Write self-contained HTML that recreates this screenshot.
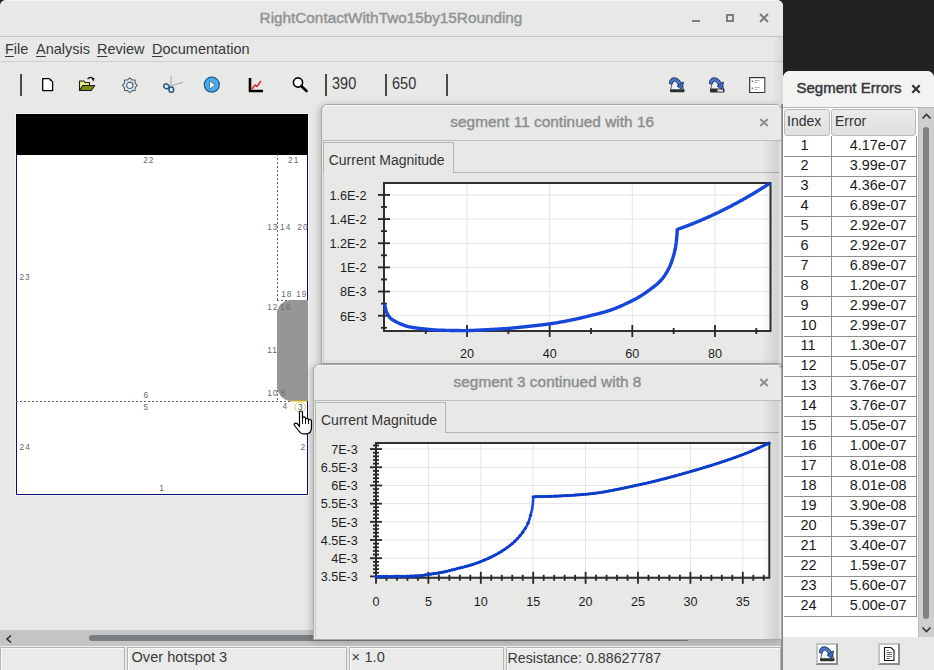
<!DOCTYPE html><html><head><meta charset="utf-8"><style>
*{box-sizing:border-box;margin:0;padding:0}
html,body{width:934px;height:670px;overflow:hidden;background:#222224;font-family:"Liberation Sans",sans-serif;position:relative}
.a{position:absolute;white-space:nowrap}
</style></head><body>
<div class="a" style="left:0;top:0;width:783px;height:670px;background:#e8e8e7;border-radius:6px 6px 0 0;overflow:hidden">
<div class="a" style="left:0;top:0;width:783px;height:37px;background:#e8e8e7;border-bottom:1px solid #c6c6c3;border-radius:6px 6px 0 0;box-shadow:inset 0 1px 0 #f4f4f3"></div>
<div class="a" style="left:0;top:9px;width:782px;text-align:center;font-size:15.3px;-webkit-text-stroke:0.45px #919495;color:#919495">RightContactWithTwo15by15Rounding</div>
<div class="a" style="left:692px;top:20px;width:8px;height:2px;background:#7b7e7f"></div>
<div class="a" style="left:726px;top:14px;width:8px;height:8px;border:2px solid #7b7e7f"></div>
<svg class="a" style="left:759px;top:13px" width="10" height="10"><path d="M1 1L9 9M9 1L1 9" stroke="#7b7e7f" stroke-width="2"/></svg>
<div class="a" style="left:0;top:61px;width:783px;height:1px;background:#cfcfcc"></div>
<div class="a" style="left:5px;top:41px;font-size:14.5px;color:#34393b"><span style="text-decoration:underline;text-underline-offset:1.5px">F</span>ile</div>
<div class="a" style="left:36px;top:41px;font-size:14.5px;color:#34393b"><span style="text-decoration:underline;text-underline-offset:1.5px">A</span>nalysis</div>
<div class="a" style="left:97px;top:41px;font-size:14.5px;color:#34393b"><span style="text-decoration:underline;text-underline-offset:1.5px">R</span>eview</div>
<div class="a" style="left:152px;top:41px;font-size:14.5px;color:#34393b"><span style="text-decoration:underline;text-underline-offset:1.5px">D</span>ocumentation</div>
<div class="a" style="left:20px;top:74px;width:2px;height:22px;background:#4a4a4a"></div>
<div class="a" style="left:325px;top:74px;width:2px;height:22px;background:#4a4a4a"></div>
<div class="a" style="left:385px;top:74px;width:2px;height:22px;background:#4a4a4a"></div>
<div class="a" style="left:446px;top:74px;width:2px;height:22px;background:#4a4a4a"></div>
<div class="a" style="left:331.8px;top:75.3px;font-size:15.6px;color:#333;transform:scaleX(0.93);transform-origin:0 0">390</div>
<div class="a" style="left:391.8px;top:75.3px;font-size:15.6px;color:#333;transform:scaleX(0.93);transform-origin:0 0">650</div>
<svg class="a" style="left:40px;top:76px" width="16" height="16"><path d="M2.7 2.6H9.3L12.6 5.9V14.6H2.7Z" fill="#fff" stroke="#000" stroke-width="1.3" stroke-linejoin="round"/><circle cx="10.6" cy="3.9" r="1" fill="#222"/></svg>
<svg class="a" style="left:78px;top:75px" width="18" height="17"><path d="M1.5 6H6L7 7.5H11.5V15.5H1.5Z" fill="#e4ec80" stroke="#1a1a1a" stroke-width="1.1" stroke-linejoin="round"/><path d="M1.5 15.5L4.8 10.5H16.8L13.2 15.5Z" fill="#7d8c12" stroke="#1a1a1a" stroke-width="1.1" stroke-linejoin="round"/><path d="M9.5 4.2Q12 1.2 14.8 3.2" fill="none" stroke="#111" stroke-width="1.2"/><path d="M13.2 3.6L16.6 2.8L15.6 6.4Z" fill="#111"/></svg>
<svg class="a" style="left:120.5px;top:76.5px" width="18" height="17"><polygon points="8.80,0.90 11.02,2.94 14.03,3.07 14.16,6.08 16.20,8.30 14.16,10.52 14.03,13.53 11.02,13.66 8.80,15.70 6.58,13.66 3.57,13.53 3.44,10.52 1.40,8.30 3.44,6.08 3.57,3.07 6.58,2.94" fill="#dcebf4" stroke="#4f5d69" stroke-width="1.1" stroke-linejoin="round"/><circle cx="8.8" cy="8.3" r="3.2" fill="#e4f0f8" stroke="#4f5d69" stroke-width="1.1"/></svg>
<svg class="a" style="left:162px;top:76px" width="23" height="17"><path d="M8.8 9.5L9.3 0.5M9.5 9.8L21 6.2" stroke="#8f9aa5" stroke-width="0.9" fill="none"/><ellipse cx="4.4" cy="10.3" rx="2.7" ry="2.3" transform="rotate(30 4.4 10.3)" fill="#d4eafa" stroke="#2f5680" stroke-width="1.5"/><ellipse cx="9.3" cy="13.7" rx="2.4" ry="2.6" fill="#d4eafa" stroke="#2f5680" stroke-width="1.5"/></svg>
<svg class="a" style="left:202px;top:76px" width="20" height="18"><circle cx="9.8" cy="8.7" r="7.5" fill="#48ace6" stroke="#22608e" stroke-width="1.3"/><path d="M7.6 4.9L13.2 8.9L7.6 13.2Z" fill="#fff" stroke="#2a6a95" stroke-width="0.8" stroke-linejoin="round"/></svg>
<svg class="a" style="left:247px;top:77px" width="18" height="16"><path d="M3 1V14H16" fill="none" stroke="#000" stroke-width="2.6"/><path d="M5 12L8 8L10 9.5L14 4" fill="none" stroke="#e0202a" stroke-width="1.5"/></svg>
<svg class="a" style="left:291px;top:76px" width="18" height="17"><circle cx="7" cy="6.5" r="4.6" fill="#fff" stroke="#000" stroke-width="1.6"/><path d="M10.2 10L15.5 15" stroke="#000" stroke-width="2.6" stroke-linecap="round"/></svg>
<svg class="a" style="left:669px;top:77px" width="16" height="16"><path d="M2.8 7.5L1.5 13.5H14.8L13.5 7.5" fill="#eef3f4" stroke="#5f6566" stroke-width="1"/><rect x="1" y="12.3" width="14.5" height="3" rx="1" fill="#2a302b"/><path d="M2 5.5Q3.2 1.8 6.5 2.6Q8.5 3.2 11 6.8" fill="none" stroke="#1f3a78" stroke-width="4.2" stroke-linecap="round"/><path d="M2 5.5Q3.2 1.8 6.5 2.6Q8.5 3.2 11 6.8" fill="none" stroke="#4f77c6" stroke-width="2.4" stroke-linecap="round"/><path d="M8 9L14.6 5L12.8 12.6Z" fill="#4068b8" stroke="#1f3a78" stroke-width="0.9" stroke-linejoin="round"/></svg>
<svg class="a" style="left:709px;top:77px" width="16" height="16"><path d="M2.8 7.5L1.5 12.5H14.8L13.5 7.5" fill="#eef3f4" stroke="#5f6566" stroke-width="1"/><rect x="1" y="11.5" width="14.5" height="4" rx="1.2" fill="#2a302b"/><rect x="8.5" y="12.5" width="5.5" height="2" fill="#f4f4f4"/><path d="M2 5.5Q3.2 1.8 6.5 2.6Q8.5 3.2 11 6.8" fill="none" stroke="#1f3a78" stroke-width="4.2" stroke-linecap="round"/><path d="M2 5.5Q3.2 1.8 6.5 2.6Q8.5 3.2 11 6.8" fill="none" stroke="#4f77c6" stroke-width="2.4" stroke-linecap="round"/><path d="M8 9L14.6 5L12.8 12.6Z" fill="#4068b8" stroke="#1f3a78" stroke-width="0.9" stroke-linejoin="round"/></svg>
<svg class="a" style="left:749px;top:77px" width="17" height="16"><rect x="0.7" y="0.6" width="15" height="15" fill="#fff" stroke="#333" stroke-width="1.2"/><path d="M15.6 1V15.6" stroke="#777" stroke-width="1"/><path d="M3.4 3.5V5M3.4 10.5V12" stroke="#3f6db8" stroke-width="1.4"/><path d="M5.5 3.5H10.5M5.5 5.5H8M5.5 10.5H10.5M5.5 12.5H8" stroke="#888" stroke-width="0.7"/></svg>
<svg class="a" style="left:0;top:100px" width="320" height="420" viewBox="0 100 320 420"><rect x="15.5" y="113.5" width="293" height="382" fill="none" stroke="#f4f4f4" stroke-width="1"/><rect x="16" y="114" width="292" height="381" fill="#fff"/><rect x="16" y="114" width="292" height="41" fill="#000"/><path d="M16.5 155V494.5H307.5V155" fill="none" stroke="#0e0e78" stroke-width="1"/><path d="M277.5 154V300" stroke="#666" stroke-width="1" stroke-dasharray="2 2"/><path d="M277 300.5H289" stroke="#666" stroke-width="1" stroke-dasharray="2 2"/><path d="M277.5 386V401" stroke="#666" stroke-width="1" stroke-dasharray="2 2"/><path d="M16 401.5H290" stroke="#666" stroke-width="1" stroke-dasharray="2 2"/><path d="M289.5 300H308V401H290Q279.5 399.5 277 388V311.5Q279 302 289.5 300Z" fill="#969696"/><path d="M290 400.8H307.5" stroke="#c8a830" stroke-width="1.3"/><text x="143.2" y="162.9" font-size="8.3" letter-spacing="1" fill="#686868" font-family="Liberation Sans">22</text><text x="288.1" y="162.8" font-size="8.3" letter-spacing="1" fill="#686868" font-family="Liberation Sans">21</text><text x="267.20000000000005" y="229.7" font-size="8.3" letter-spacing="1" fill="#686868" font-family="Liberation Sans">13</text><text x="280.1" y="229.7" font-size="8.3" letter-spacing="1" fill="#686868" font-family="Liberation Sans">14</text><text x="297.3" y="229.7" font-size="8.3" letter-spacing="1" fill="#686868" font-family="Liberation Sans">20</text><text x="19.5" y="279.7" font-size="8.3" letter-spacing="1" fill="#686868" font-family="Liberation Sans">23</text><text x="281.20000000000005" y="296.9" font-size="8.3" letter-spacing="1" fill="#686868" font-family="Liberation Sans">18</text><text x="296.20000000000005" y="296.9" font-size="8.3" letter-spacing="1" fill="#686868" font-family="Liberation Sans">19</text><text x="267.20000000000005" y="309.8" font-size="8.3" letter-spacing="1" fill="#686868" font-family="Liberation Sans">12</text><text x="267.20000000000005" y="353" font-size="8.3" letter-spacing="1" fill="#686868" font-family="Liberation Sans">11</text><text x="267.20000000000005" y="395.8" font-size="8.3" letter-spacing="1" fill="#686868" font-family="Liberation Sans">10</text><text x="143.6" y="397.8" font-size="8.3" letter-spacing="1" fill="#686868" font-family="Liberation Sans">6</text><text x="143.6" y="409.6" font-size="8.3" letter-spacing="1" fill="#686868" font-family="Liberation Sans">5</text><text x="282.6" y="409.4" font-size="8.3" letter-spacing="1" fill="#686868" font-family="Liberation Sans">4</text><text x="19.6" y="450" font-size="8.3" letter-spacing="1" fill="#686868" font-family="Liberation Sans">24</text><text x="300.6" y="449.7" font-size="8.3" letter-spacing="1" fill="#686868" font-family="Liberation Sans">2</text><text x="159.29999999999998" y="490.6" font-size="8.3" letter-spacing="1" fill="#686868" font-family="Liberation Sans">1</text><text x="280.1" y="309.8" font-size="8.3" letter-spacing="1" fill="#6e6e6e" font-family="Liberation Sans">16</text><text x="280.4" y="396" font-size="8.3" fill="#6e6e6e" font-family="Liberation Sans">8</text><circle cx="300.2" cy="407.3" r="5.2" fill="none" stroke="#e0d050" stroke-width="1"/><text x="297.9" y="410.2" font-size="8.3" fill="#5c5c5c" font-family="Liberation Sans">3</text><g transform="translate(293,410)"><path d="M6.5 14V2.8Q6.5 1 8 1Q9.5 1 9.5 2.8V9V8Q9.5 6.8 11 6.8Q12.5 6.8 12.5 8V9.5Q12.5 8.3 14 8.3Q15.5 8.3 15.5 9.8V10.5Q15.5 9.5 17 9.5Q18.5 9.5 18.5 11V17.5Q18.5 23.5 13.5 23.8H10.5Q7.5 23.8 5.5 20.5L1.5 15.5Q0.6 14 2 13.4Q3.4 12.8 4.6 14.2L6.5 16.5Z" fill="#fff" stroke="#000" stroke-width="1.2" stroke-linejoin="round"/><path d="M9.5 9V14M12.5 9.5V14M15.5 10.5V14" stroke="#000" stroke-width="0.9"/></g></svg>
<div class="a" style="left:0;top:630px;width:782px;height:17px;background:#c4c4c4;border-bottom:1px solid #f0f0f0"></div>
<div class="a" style="left:89px;top:635px;width:600px;height:6px;border-radius:3px;background:#7a7e80"></div>
<svg class="a" style="left:5px;top:634px" width="8" height="10"><path d="M6 1.5L2 5L6 8.5" fill="none" stroke="#2e3436" stroke-width="1.6"/></svg>
<div class="a" style="left:0px;top:647px;width:125px;height:23px;border:1px solid #b4b4b2;border-bottom:none;background:#eaeae9;box-shadow:inset 1px 1px 0 #fafafa"></div>
<div class="a" style="left:127px;top:647px;width:220px;height:23px;border:1px solid #b4b4b2;border-bottom:none;background:#eaeae9;box-shadow:inset 1px 1px 0 #fafafa"></div>
<div class="a" style="left:349px;top:647px;width:155px;height:23px;border:1px solid #b4b4b2;border-bottom:none;background:#eaeae9;box-shadow:inset 1px 1px 0 #fafafa"></div>
<div class="a" style="left:506px;top:647px;width:275px;height:23px;border:1px solid #b4b4b2;border-bottom:none;background:#eaeae9;box-shadow:inset 1px 1px 0 #fafafa"></div>
<div class="a" style="left:131.5px;top:649px;font-size:14.6px;color:#3b3b3b">Over hotspot 3</div>
<div class="a" style="left:351.5px;top:649px;font-size:14.6px;color:#3b3b3b">×</div>
<div class="a" style="left:364.5px;top:649px;font-size:14.6px;color:#3b3b3b">1.0</div>
<div class="a" style="left:507.5px;top:649.5px;font-size:14.25px;color:#3b3b3b">Resistance: 0.88627787</div>
</div>
<div class="a" style="left:781px;top:104px;width:2px;height:566px;background:#8c8c8b"></div>
<div class="a" style="left:772px;top:37px;width:11px;height:67px;background:linear-gradient(to right,rgba(0,0,0,0),rgba(0,0,0,0.07))"></div>
<div class="a" style="left:321px;top:104px;width:461px;height:260px;background:#e8e8e7;border:1px solid #a9a9a7;border-radius:6px 6px 0 0;box-shadow:-2px 1px 7px rgba(0,0,0,0.2);overflow:hidden"><div class="a" style="left:0;top:0;width:461px;height:1px;background:#f6f6f5"></div></div><div class="a" style="left:322px;top:140px;width:459px;height:1px;background:#bdbdba"></div><div class="a" style="left:450.3px;top:113px;font-size:15.3px;letter-spacing:0.06px;-webkit-text-stroke:0.45px #8c8f90;color:#8c8f90">segment 11 continued with 16</div><svg class="a" style="left:759px;top:118px" width="10" height="9"><path d="M1.2 1L8.8 8M8.8 1L1.2 8" stroke="#8a8d8e" stroke-width="2"/></svg><div class="a" style="left:323px;top:141px;width:1px;height:221px;background:#c8c8c6"></div><div class="a" style="left:323px;top:142px;width:131px;height:31px;border:1px solid #b5b5b3;border-bottom:none;background:#e8e8e7;"></div><div class="a" style="left:454px;top:172px;width:326px;height:1px;background:#b5b5b3"></div><div class="a" style="left:328.7px;top:151.8px;font-size:14px;color:#353535">Current Magnitude</div><svg class="a" style="left:0;top:0" width="934" height="670"><rect x="384" y="183" width="386.5" height="148" fill="#fff"/><path d="M467.04 183V331" stroke="#e4e4e4" stroke-width="1"/><path d="M549.68 183V331" stroke="#e4e4e4" stroke-width="1"/><path d="M632.32 183V331" stroke="#e4e4e4" stroke-width="1"/><path d="M714.96 183V331" stroke="#e4e4e4" stroke-width="1"/><path d="M384 315.70H770.5" stroke="#e4e4e4" stroke-width="1"/><path d="M384 291.54H770.5" stroke="#e4e4e4" stroke-width="1"/><path d="M384 267.38H770.5" stroke="#e4e4e4" stroke-width="1"/><path d="M384 243.22H770.5" stroke="#e4e4e4" stroke-width="1"/><path d="M384 219.06H770.5" stroke="#e4e4e4" stroke-width="1"/><path d="M384 194.90H770.5" stroke="#e4e4e4" stroke-width="1"/><rect x="384" y="183" width="386.5" height="148" fill="none" stroke="#303030" stroke-width="2"/><path d="M378 315.70H390" stroke="#262626" stroke-width="1.8"/><path d="M378 291.54H390" stroke="#262626" stroke-width="1.8"/><path d="M378 267.38H390" stroke="#262626" stroke-width="1.8"/><path d="M378 243.22H390" stroke="#262626" stroke-width="1.8"/><path d="M378 219.06H390" stroke="#262626" stroke-width="1.8"/><path d="M378 194.90H390" stroke="#262626" stroke-width="1.8"/><path d="M381 327.78H387" stroke="#262626" stroke-width="1.8"/><path d="M381 303.62H387" stroke="#262626" stroke-width="1.8"/><path d="M381 279.46H387" stroke="#262626" stroke-width="1.8"/><path d="M381 255.30H387" stroke="#262626" stroke-width="1.8"/><path d="M381 231.14H387" stroke="#262626" stroke-width="1.8"/><path d="M381 206.98H387" stroke="#262626" stroke-width="1.8"/><path d="M467.04 325V337" stroke="#262626" stroke-width="1.8"/><path d="M549.68 325V337" stroke="#262626" stroke-width="1.8"/><path d="M632.32 325V337" stroke="#262626" stroke-width="1.8"/><path d="M714.96 325V337" stroke="#262626" stroke-width="1.8"/><path d="M425.72 328V334" stroke="#262626" stroke-width="1.8"/><path d="M508.36 328V334" stroke="#262626" stroke-width="1.8"/><path d="M591.00 328V334" stroke="#262626" stroke-width="1.8"/><path d="M673.64 328V334" stroke="#262626" stroke-width="1.8"/><path d="M756.28 328V334" stroke="#262626" stroke-width="1.8"/><path d="M384.50 303.50 L385.00 306.01 L385.50 308.52 L386.00 310.50 L386.50 311.91 L387.00 313.09 L387.50 314.10 L388.00 315.00 L388.50 315.83 L389.00 316.59 L389.50 317.25 L390.00 317.80 L390.50 318.26 L391.00 318.68 L391.50 319.06 L392.00 319.41 L392.50 319.74 L393.00 320.05 L393.50 320.35 L394.00 320.63 L394.50 320.91 L395.00 321.20 L395.50 321.49 L396.00 321.76 L396.50 322.04 L397.00 322.30 L397.50 322.56 L398.00 322.80 L398.50 323.04 L399.00 323.27 L399.50 323.49 L400.00 323.70 L400.50 323.90 L401.00 324.10 L401.50 324.30 L402.00 324.50 L402.50 324.70 L403.00 324.89 L403.50 325.08 L404.00 325.26 L404.50 325.44 L405.00 325.61 L405.50 325.78 L406.00 325.95 L406.50 326.11 L407.00 326.26 L407.50 326.40 L408.00 326.54 L408.50 326.67 L409.00 326.79 L409.50 326.90 L410.00 327.00 L410.50 327.10 L411.00 327.19 L411.50 327.28 L412.00 327.37 L412.50 327.45 L413.00 327.54 L413.50 327.62 L414.00 327.69 L414.50 327.77 L415.00 327.84 L415.50 327.91 L416.00 327.98 L416.50 328.05 L417.00 328.12 L417.50 328.18 L418.00 328.24 L418.50 328.30 L419.00 328.36 L419.50 328.42 L420.00 328.48 L420.50 328.53 L421.00 328.59 L421.50 328.64 L422.00 328.69 L422.50 328.75 L423.00 328.80 L423.50 328.85 L424.00 328.90 L424.50 328.95 L425.00 329.00 L425.50 329.05 L426.00 329.10 L426.50 329.15 L427.00 329.20 L427.50 329.25 L428.00 329.30 L428.50 329.35 L429.00 329.40 L429.50 329.45 L430.00 329.50 L430.50 329.55 L431.00 329.60 L431.50 329.65 L432.00 329.69 L432.50 329.74 L433.00 329.78 L433.50 329.82 L434.00 329.86 L434.50 329.90 L435.00 329.94 L435.50 329.97 L436.00 330.01 L436.50 330.04 L437.00 330.07 L437.50 330.10 L438.00 330.12 L438.50 330.15 L439.00 330.17 L439.50 330.18 L440.00 330.20 L440.50 330.21 L441.00 330.23 L441.50 330.24 L442.00 330.25 L442.50 330.27 L443.00 330.28 L443.50 330.29 L444.00 330.30 L444.50 330.32 L445.00 330.33 L445.50 330.34 L446.00 330.35 L446.50 330.36 L447.00 330.37 L447.50 330.38 L448.00 330.40 L448.50 330.41 L449.00 330.42 L449.50 330.43 L450.00 330.44 L450.50 330.45 L451.00 330.45 L451.50 330.46 L452.00 330.47 L452.50 330.48 L453.00 330.49 L453.50 330.50 L454.00 330.50 L454.50 330.51 L455.00 330.52 L455.50 330.53 L456.00 330.53 L456.50 330.54 L457.00 330.55 L457.50 330.55 L458.00 330.56 L458.50 330.56 L459.00 330.57 L459.50 330.57 L460.00 330.58 L460.50 330.58 L461.00 330.58 L461.50 330.59 L462.00 330.59 L462.50 330.59 L463.00 330.59 L463.50 330.60 L464.00 330.60 L464.50 330.60 L465.00 330.60 L465.50 330.60 L466.00 330.60 L466.50 330.60 L467.00 330.60 L467.50 330.59 L468.00 330.58 L468.50 330.58 L469.00 330.57 L469.50 330.55 L470.00 330.54 L470.50 330.53 L471.00 330.51 L471.50 330.49 L472.00 330.48 L472.50 330.46 L473.00 330.43 L473.50 330.41 L474.00 330.39 L474.50 330.37 L475.00 330.34 L475.50 330.32 L476.00 330.29 L476.50 330.27 L477.00 330.24 L477.50 330.21 L478.00 330.18 L478.50 330.16 L479.00 330.13 L479.50 330.10 L480.00 330.07 L480.50 330.04 L481.00 330.01 L481.50 329.99 L482.00 329.96 L482.50 329.93 L483.00 329.90 L483.50 329.88 L484.00 329.85 L484.50 329.83 L485.00 329.80 L485.50 329.78 L486.00 329.75 L486.50 329.72 L487.00 329.70 L487.50 329.67 L488.00 329.65 L488.50 329.62 L489.00 329.60 L489.50 329.57 L490.00 329.54 L490.50 329.52 L491.00 329.49 L491.50 329.46 L492.00 329.43 L492.50 329.41 L493.00 329.38 L493.50 329.35 L494.00 329.32 L494.50 329.29 L495.00 329.26 L495.50 329.24 L496.00 329.21 L496.50 329.18 L497.00 329.15 L497.50 329.12 L498.00 329.08 L498.50 329.05 L499.00 329.02 L499.50 328.99 L500.00 328.96 L500.50 328.93 L501.00 328.89 L501.50 328.86 L502.00 328.83 L502.50 328.79 L503.00 328.76 L503.50 328.73 L504.00 328.69 L504.50 328.66 L505.00 328.62 L505.50 328.58 L506.00 328.55 L506.50 328.51 L507.00 328.48 L507.50 328.44 L508.00 328.40 L508.50 328.36 L509.00 328.32 L509.50 328.28 L510.00 328.24 L510.50 328.20 L511.00 328.16 L511.50 328.11 L512.00 328.07 L512.50 328.03 L513.00 327.98 L513.50 327.93 L514.00 327.89 L514.50 327.84 L515.00 327.79 L515.50 327.74 L516.00 327.69 L516.50 327.64 L517.00 327.59 L517.50 327.54 L518.00 327.49 L518.50 327.44 L519.00 327.39 L519.50 327.34 L520.00 327.29 L520.50 327.23 L521.00 327.18 L521.50 327.13 L522.00 327.07 L522.50 327.02 L523.00 326.96 L523.50 326.91 L524.00 326.86 L524.50 326.80 L525.00 326.75 L525.50 326.69 L526.00 326.64 L526.50 326.58 L527.00 326.53 L527.50 326.47 L528.00 326.42 L528.50 326.36 L529.00 326.31 L529.50 326.25 L530.00 326.20 L530.51 326.14 L531.02 326.09 L531.53 326.03 L532.04 325.98 L532.55 325.92 L533.06 325.87 L533.57 325.81 L534.08 325.76 L534.59 325.70 L535.11 325.64 L535.62 325.59 L536.13 325.53 L536.64 325.48 L537.15 325.42 L537.66 325.36 L538.17 325.30 L538.68 325.25 L539.19 325.19 L539.70 325.13 L540.21 325.07 L540.72 325.01 L541.23 324.95 L541.74 324.89 L542.25 324.83 L542.76 324.77 L543.27 324.70 L543.78 324.64 L544.29 324.58 L544.81 324.51 L545.32 324.45 L545.83 324.38 L546.34 324.32 L546.85 324.25 L547.36 324.18 L547.87 324.11 L548.38 324.04 L548.89 323.97 L549.40 323.90 L549.90 323.83 L550.40 323.76 L550.91 323.68 L551.41 323.61 L551.91 323.53 L552.41 323.46 L552.92 323.38 L553.42 323.30 L553.92 323.22 L554.42 323.14 L554.93 323.06 L555.43 322.98 L555.93 322.89 L556.43 322.81 L556.94 322.73 L557.44 322.64 L557.94 322.55 L558.44 322.47 L558.95 322.38 L559.45 322.29 L559.95 322.20 L560.45 322.11 L560.96 322.02 L561.46 321.93 L561.96 321.84 L562.46 321.75 L562.97 321.65 L563.47 321.56 L563.97 321.47 L564.47 321.37 L564.98 321.28 L565.48 321.18 L565.98 321.08 L566.48 320.99 L566.99 320.89 L567.49 320.79 L567.99 320.70 L568.49 320.60 L569.00 320.50 L569.50 320.40 L570.00 320.30 L570.50 320.20 L571.00 320.10 L571.51 320.00 L572.01 319.89 L572.51 319.79 L573.01 319.69 L573.52 319.58 L574.02 319.47 L574.52 319.37 L575.02 319.26 L575.53 319.15 L576.03 319.04 L576.53 318.93 L577.03 318.82 L577.54 318.71 L578.04 318.60 L578.54 318.48 L579.04 318.37 L579.55 318.25 L580.05 318.14 L580.55 318.02 L581.05 317.91 L581.56 317.79 L582.06 317.67 L582.56 317.55 L583.06 317.44 L583.57 317.32 L584.07 317.20 L584.57 317.08 L585.07 316.96 L585.58 316.83 L586.08 316.71 L586.58 316.59 L587.08 316.47 L587.59 316.34 L588.09 316.22 L588.59 316.10 L589.09 315.97 L589.60 315.85 L590.10 315.72 L590.60 315.60 L591.11 315.47 L591.62 315.35 L592.13 315.22 L592.64 315.09 L593.15 314.97 L593.66 314.84 L594.17 314.71 L594.68 314.59 L595.19 314.46 L595.71 314.33 L596.22 314.20 L596.73 314.08 L597.24 313.95 L597.75 313.82 L598.26 313.69 L598.77 313.55 L599.28 313.42 L599.79 313.29 L600.30 313.15 L600.81 313.02 L601.32 312.88 L601.83 312.74 L602.34 312.61 L602.85 312.46 L603.36 312.32 L603.87 312.18 L604.38 312.03 L604.89 311.89 L605.41 311.74 L605.92 311.59 L606.43 311.43 L606.94 311.28 L607.45 311.12 L607.96 310.96 L608.47 310.80 L608.98 310.64 L609.49 310.47 L610.00 310.30 L610.51 310.13 L611.02 309.95 L611.53 309.78 L612.04 309.60 L612.55 309.41 L613.05 309.23 L613.56 309.04 L614.07 308.85 L614.58 308.65 L615.09 308.45 L615.60 308.25 L616.11 308.05 L616.62 307.85 L617.13 307.64 L617.64 307.43 L618.15 307.22 L618.65 307.01 L619.16 306.79 L619.67 306.57 L620.18 306.35 L620.69 306.13 L621.20 305.90 L621.71 305.68 L622.22 305.45 L622.73 305.22 L623.24 304.99 L623.75 304.76 L624.25 304.52 L624.76 304.29 L625.27 304.05 L625.78 303.81 L626.29 303.57 L626.80 303.33 L627.31 303.08 L627.82 302.84 L628.33 302.59 L628.84 302.35 L629.35 302.10 L629.85 301.85 L630.36 301.60 L630.87 301.35 L631.38 301.10 L631.89 300.85 L632.40 300.60 L632.91 300.35 L633.41 300.09 L633.92 299.83 L634.43 299.56 L634.93 299.29 L635.44 299.02 L635.95 298.75 L636.45 298.47 L636.96 298.18 L637.47 297.89 L637.97 297.60 L638.48 297.31 L638.99 297.01 L639.49 296.71 L640.00 296.40 L640.50 296.09 L641.00 295.79 L641.50 295.47 L642.00 295.16 L642.50 294.84 L643.00 294.52 L643.50 294.19 L644.00 293.86 L644.50 293.53 L645.00 293.19 L645.50 292.85 L646.00 292.50 L646.50 292.15 L647.00 291.80 L647.50 291.44 L648.00 291.08 L648.50 290.72 L649.00 290.35 L649.50 289.98 L650.00 289.60 L650.50 289.22 L651.00 288.85 L651.50 288.47 L652.00 288.10 L652.50 287.72 L653.00 287.34 L653.50 286.96 L654.00 286.58 L654.50 286.19 L655.00 285.79 L655.50 285.39 L656.00 284.98 L656.50 284.56 L657.00 284.14 L657.50 283.70 L658.00 283.25 L658.50 282.79 L659.00 282.31 L659.50 281.82 L660.00 281.32 L660.50 280.80 L661.00 280.26 L661.50 279.70 L662.00 279.12 L662.50 278.52 L663.00 277.89 L663.50 277.23 L664.00 276.54 L664.50 275.83 L665.00 275.09 L665.50 274.31 L666.00 273.51 L666.50 272.67 L667.00 271.81 L667.50 270.91 L668.00 269.97 L668.50 269.00 L669.00 268.00 L669.50 266.95 L670.00 265.83 L670.50 264.65 L671.00 263.39 L671.50 262.05 L672.00 260.63 L672.50 259.12 L673.00 257.51 L673.50 255.81 L674.00 254.00 L674.55 251.87 L675.10 249.46 L675.65 246.57 L676.20 243.00 L676.70 237.97 L677.20 232.00 L677.20 229.50 L677.70 229.32 L678.20 229.14 L678.70 228.96 L679.20 228.78 L679.70 228.61 L680.20 228.43 L680.70 228.25 L681.20 228.07 L681.70 227.89 L682.20 227.71 L682.70 227.52 L683.20 227.34 L683.70 227.16 L684.20 226.97 L684.70 226.78 L685.20 226.60 L685.70 226.41 L686.20 226.22 L686.70 226.03 L687.20 225.84 L687.70 225.65 L688.20 225.46 L688.70 225.26 L689.20 225.07 L689.70 224.88 L690.20 224.68 L690.70 224.48 L691.20 224.29 L691.70 224.09 L692.20 223.89 L692.70 223.69 L693.20 223.49 L693.70 223.29 L694.20 223.09 L694.70 222.88 L695.20 222.68 L695.70 222.48 L696.20 222.27 L696.70 222.06 L697.20 221.86 L697.70 221.65 L698.20 221.44 L698.70 221.23 L699.20 221.02 L699.70 220.81 L700.20 220.60 L700.70 220.38 L701.20 220.17 L701.70 219.95 L702.20 219.74 L702.70 219.52 L703.20 219.31 L703.70 219.09 L704.20 218.87 L704.70 218.65 L705.20 218.44 L705.70 218.21 L706.20 217.99 L706.70 217.77 L707.20 217.55 L707.70 217.33 L708.20 217.10 L708.70 216.88 L709.20 216.65 L709.70 216.42 L710.20 216.20 L710.70 215.97 L711.20 215.74 L711.70 215.51 L712.20 215.28 L712.70 215.04 L713.20 214.81 L713.70 214.58 L714.20 214.34 L714.70 214.11 L715.20 213.87 L715.70 213.63 L716.20 213.40 L716.70 213.16 L717.20 212.92 L717.70 212.68 L718.20 212.44 L718.70 212.20 L719.20 211.96 L719.70 211.71 L720.20 211.47 L720.70 211.23 L721.20 210.98 L721.70 210.73 L722.20 210.49 L722.70 210.24 L723.20 209.99 L723.70 209.74 L724.20 209.49 L724.70 209.24 L725.20 208.99 L725.70 208.74 L726.20 208.48 L726.70 208.23 L727.20 207.97 L727.70 207.72 L728.20 207.46 L728.70 207.20 L729.20 206.95 L729.70 206.69 L730.20 206.43 L730.70 206.17 L731.20 205.90 L731.70 205.64 L732.20 205.38 L732.70 205.11 L733.20 204.85 L733.70 204.58 L734.20 204.32 L734.70 204.05 L735.20 203.78 L735.70 203.52 L736.20 203.25 L736.70 202.98 L737.20 202.71 L737.70 202.43 L738.20 202.16 L738.70 201.89 L739.20 201.61 L739.70 201.34 L740.20 201.06 L740.70 200.79 L741.20 200.51 L741.70 200.23 L742.20 199.95 L742.70 199.67 L743.20 199.39 L743.70 199.11 L744.20 198.82 L744.70 198.54 L745.20 198.26 L745.70 197.97 L746.20 197.68 L746.70 197.40 L747.20 197.11 L747.70 196.82 L748.20 196.53 L748.70 196.24 L749.20 195.95 L749.70 195.66 L750.20 195.37 L750.70 195.07 L751.20 194.78 L751.70 194.49 L752.20 194.19 L752.70 193.90 L753.20 193.60 L753.70 193.30 L754.20 193.00 L754.70 192.71 L755.20 192.41 L755.70 192.11 L756.20 191.80 L756.70 191.50 L757.20 191.20 L757.70 190.90 L758.20 190.59 L758.70 190.29 L759.20 189.98 L759.70 189.67 L760.20 189.36 L760.70 189.05 L761.20 188.74 L761.70 188.43 L762.20 188.12 L762.70 187.80 L763.20 187.49 L763.72 187.16 L764.25 186.83 L764.77 186.50 L765.29 186.16 L765.82 185.83 L766.34 185.50 L766.86 185.16 L767.38 184.83 L767.91 184.49 L768.43 184.15 L768.95 183.82 L769.48 183.48 L770.00 183.15" fill="none" stroke="#1646da" stroke-width="3.4" stroke-linejoin="round"/><text x="467.04" y="358.3" font-size="12.6" fill="#1e1e1e" text-anchor="middle" font-family="Liberation Sans">20</text><text x="549.68" y="358.3" font-size="12.6" fill="#1e1e1e" text-anchor="middle" font-family="Liberation Sans">40</text><text x="632.32" y="358.3" font-size="12.6" fill="#1e1e1e" text-anchor="middle" font-family="Liberation Sans">60</text><text x="714.96" y="358.3" font-size="12.6" fill="#1e1e1e" text-anchor="middle" font-family="Liberation Sans">80</text><text x="366.5" y="199.70" font-size="12.6" fill="#1e1e1e" text-anchor="end" font-family="Liberation Sans">1.6E-2</text><text x="366.5" y="223.86" font-size="12.6" fill="#1e1e1e" text-anchor="end" font-family="Liberation Sans">1.4E-2</text><text x="366.5" y="248.02" font-size="12.6" fill="#1e1e1e" text-anchor="end" font-family="Liberation Sans">1.2E-2</text><text x="366.5" y="272.18" font-size="12.6" fill="#1e1e1e" text-anchor="end" font-family="Liberation Sans">1E-2</text><text x="366.5" y="296.34" font-size="12.6" fill="#1e1e1e" text-anchor="end" font-family="Liberation Sans">8E-3</text><text x="366.5" y="320.50" font-size="12.6" fill="#1e1e1e" text-anchor="end" font-family="Liberation Sans">6E-3</text></svg><div class="a" style="left:762px;top:141px;width:17px;height:222px;background:linear-gradient(to right,rgba(0,0,0,0),rgba(0,0,0,0.10))"></div><div class="a" style="left:779px;top:141px;width:2px;height:222px;background:#e2e2e1"></div>
<div class="a" style="left:313px;top:364px;width:469px;height:276px;background:#e8e8e7;border:1px solid #a9a9a7;border-radius:6px 6px 0 0;box-shadow:-2px 1px 7px rgba(0,0,0,0.2);overflow:hidden"><div class="a" style="left:0;top:0;width:469px;height:1px;background:#f6f6f5"></div></div><div class="a" style="left:314px;top:400px;width:467px;height:1px;background:#bdbdba"></div><div class="a" style="left:453.6px;top:373px;font-size:15.3px;letter-spacing:0.06px;-webkit-text-stroke:0.45px #8c8f90;color:#8c8f90">segment 3 continued with 8</div><svg class="a" style="left:759px;top:378px" width="10" height="9"><path d="M1.2 1L8.8 8M8.8 1L1.2 8" stroke="#8a8d8e" stroke-width="2"/></svg><div class="a" style="left:315px;top:401px;width:1px;height:237px;background:#c8c8c6"></div><div class="a" style="left:315px;top:402px;width:131px;height:31px;border:1px solid #b5b5b3;border-bottom:none;background:#e8e8e7;"></div><div class="a" style="left:446px;top:432px;width:334px;height:1px;background:#b5b5b3"></div><div class="a" style="left:321px;top:411.5px;font-size:14px;color:#353535">Current Magnitude</div><svg class="a" style="left:0;top:0" width="934" height="670"><rect x="376" y="443" width="393.29999999999995" height="134.79999999999995" fill="#fff"/><path d="M428.40 443V577.8" stroke="#e4e4e4" stroke-width="1"/><path d="M480.80 443V577.8" stroke="#e4e4e4" stroke-width="1"/><path d="M533.20 443V577.8" stroke="#e4e4e4" stroke-width="1"/><path d="M585.60 443V577.8" stroke="#e4e4e4" stroke-width="1"/><path d="M638.00 443V577.8" stroke="#e4e4e4" stroke-width="1"/><path d="M690.40 443V577.8" stroke="#e4e4e4" stroke-width="1"/><path d="M742.80 443V577.8" stroke="#e4e4e4" stroke-width="1"/><path d="M376 576.40H769.3" stroke="#e4e4e4" stroke-width="1"/><path d="M376 558.21H769.3" stroke="#e4e4e4" stroke-width="1"/><path d="M376 540.02H769.3" stroke="#e4e4e4" stroke-width="1"/><path d="M376 521.83H769.3" stroke="#e4e4e4" stroke-width="1"/><path d="M376 503.64H769.3" stroke="#e4e4e4" stroke-width="1"/><path d="M376 485.45H769.3" stroke="#e4e4e4" stroke-width="1"/><path d="M376 467.26H769.3" stroke="#e4e4e4" stroke-width="1"/><path d="M376 449.07H769.3" stroke="#e4e4e4" stroke-width="1"/><rect x="376" y="443" width="393.29999999999995" height="134.79999999999995" fill="none" stroke="#303030" stroke-width="2"/><path d="M370 576.40H382" stroke="#262626" stroke-width="1.8"/><path d="M370 558.21H382" stroke="#262626" stroke-width="1.8"/><path d="M370 540.02H382" stroke="#262626" stroke-width="1.8"/><path d="M370 521.83H382" stroke="#262626" stroke-width="1.8"/><path d="M370 503.64H382" stroke="#262626" stroke-width="1.8"/><path d="M370 485.45H382" stroke="#262626" stroke-width="1.8"/><path d="M370 467.26H382" stroke="#262626" stroke-width="1.8"/><path d="M370 449.07H382" stroke="#262626" stroke-width="1.8"/><path d="M373 572.76H379" stroke="#262626" stroke-width="1.8"/><path d="M373 569.12H379" stroke="#262626" stroke-width="1.8"/><path d="M373 565.49H379" stroke="#262626" stroke-width="1.8"/><path d="M373 561.85H379" stroke="#262626" stroke-width="1.8"/><path d="M373 554.57H379" stroke="#262626" stroke-width="1.8"/><path d="M373 550.93H379" stroke="#262626" stroke-width="1.8"/><path d="M373 547.30H379" stroke="#262626" stroke-width="1.8"/><path d="M373 543.66H379" stroke="#262626" stroke-width="1.8"/><path d="M373 536.38H379" stroke="#262626" stroke-width="1.8"/><path d="M373 532.74H379" stroke="#262626" stroke-width="1.8"/><path d="M373 529.11H379" stroke="#262626" stroke-width="1.8"/><path d="M373 525.47H379" stroke="#262626" stroke-width="1.8"/><path d="M373 518.19H379" stroke="#262626" stroke-width="1.8"/><path d="M373 514.55H379" stroke="#262626" stroke-width="1.8"/><path d="M373 510.92H379" stroke="#262626" stroke-width="1.8"/><path d="M373 507.28H379" stroke="#262626" stroke-width="1.8"/><path d="M373 500.00H379" stroke="#262626" stroke-width="1.8"/><path d="M373 496.36H379" stroke="#262626" stroke-width="1.8"/><path d="M373 492.73H379" stroke="#262626" stroke-width="1.8"/><path d="M373 489.09H379" stroke="#262626" stroke-width="1.8"/><path d="M373 481.81H379" stroke="#262626" stroke-width="1.8"/><path d="M373 478.17H379" stroke="#262626" stroke-width="1.8"/><path d="M373 474.54H379" stroke="#262626" stroke-width="1.8"/><path d="M373 470.90H379" stroke="#262626" stroke-width="1.8"/><path d="M373 463.62H379" stroke="#262626" stroke-width="1.8"/><path d="M373 459.98H379" stroke="#262626" stroke-width="1.8"/><path d="M373 456.35H379" stroke="#262626" stroke-width="1.8"/><path d="M373 452.71H379" stroke="#262626" stroke-width="1.8"/><path d="M373 445.43H379" stroke="#262626" stroke-width="1.8"/><path d="M376.00 571.8V583.8" stroke="#262626" stroke-width="1.8"/><path d="M428.40 571.8V583.8" stroke="#262626" stroke-width="1.8"/><path d="M480.80 571.8V583.8" stroke="#262626" stroke-width="1.8"/><path d="M533.20 571.8V583.8" stroke="#262626" stroke-width="1.8"/><path d="M585.60 571.8V583.8" stroke="#262626" stroke-width="1.8"/><path d="M638.00 571.8V583.8" stroke="#262626" stroke-width="1.8"/><path d="M690.40 571.8V583.8" stroke="#262626" stroke-width="1.8"/><path d="M742.80 571.8V583.8" stroke="#262626" stroke-width="1.8"/><path d="M386.48 574.8V580.8" stroke="#262626" stroke-width="1.8"/><path d="M396.96 574.8V580.8" stroke="#262626" stroke-width="1.8"/><path d="M407.44 574.8V580.8" stroke="#262626" stroke-width="1.8"/><path d="M417.92 574.8V580.8" stroke="#262626" stroke-width="1.8"/><path d="M438.88 574.8V580.8" stroke="#262626" stroke-width="1.8"/><path d="M449.36 574.8V580.8" stroke="#262626" stroke-width="1.8"/><path d="M459.84 574.8V580.8" stroke="#262626" stroke-width="1.8"/><path d="M470.32 574.8V580.8" stroke="#262626" stroke-width="1.8"/><path d="M491.28 574.8V580.8" stroke="#262626" stroke-width="1.8"/><path d="M501.76 574.8V580.8" stroke="#262626" stroke-width="1.8"/><path d="M512.24 574.8V580.8" stroke="#262626" stroke-width="1.8"/><path d="M522.72 574.8V580.8" stroke="#262626" stroke-width="1.8"/><path d="M543.68 574.8V580.8" stroke="#262626" stroke-width="1.8"/><path d="M554.16 574.8V580.8" stroke="#262626" stroke-width="1.8"/><path d="M564.64 574.8V580.8" stroke="#262626" stroke-width="1.8"/><path d="M575.12 574.8V580.8" stroke="#262626" stroke-width="1.8"/><path d="M596.08 574.8V580.8" stroke="#262626" stroke-width="1.8"/><path d="M606.56 574.8V580.8" stroke="#262626" stroke-width="1.8"/><path d="M617.04 574.8V580.8" stroke="#262626" stroke-width="1.8"/><path d="M627.52 574.8V580.8" stroke="#262626" stroke-width="1.8"/><path d="M648.48 574.8V580.8" stroke="#262626" stroke-width="1.8"/><path d="M658.96 574.8V580.8" stroke="#262626" stroke-width="1.8"/><path d="M669.44 574.8V580.8" stroke="#262626" stroke-width="1.8"/><path d="M679.92 574.8V580.8" stroke="#262626" stroke-width="1.8"/><path d="M700.88 574.8V580.8" stroke="#262626" stroke-width="1.8"/><path d="M711.36 574.8V580.8" stroke="#262626" stroke-width="1.8"/><path d="M721.84 574.8V580.8" stroke="#262626" stroke-width="1.8"/><path d="M732.32 574.8V580.8" stroke="#262626" stroke-width="1.8"/><path d="M753.28 574.8V580.8" stroke="#262626" stroke-width="1.8"/><path d="M763.76 574.8V580.8" stroke="#262626" stroke-width="1.8"/><path d="M376.00 576.60 L376.50 576.60 L377.00 576.59 L377.50 576.59 L378.00 576.58 L378.50 576.58 L379.00 576.58 L379.50 576.57 L380.00 576.57 L380.50 576.57 L381.00 576.56 L381.50 576.56 L382.00 576.56 L382.50 576.55 L383.00 576.55 L383.50 576.55 L384.00 576.54 L384.50 576.54 L385.00 576.54 L385.50 576.53 L386.00 576.53 L386.50 576.53 L387.00 576.52 L387.50 576.52 L388.00 576.52 L388.50 576.51 L389.00 576.51 L389.50 576.51 L390.00 576.50 L390.50 576.50 L391.00 576.49 L391.50 576.49 L392.00 576.49 L392.50 576.48 L393.00 576.48 L393.50 576.47 L394.00 576.47 L394.50 576.46 L395.00 576.46 L395.50 576.45 L396.00 576.45 L396.50 576.44 L397.00 576.44 L397.50 576.43 L398.00 576.43 L398.50 576.42 L399.00 576.41 L399.50 576.41 L400.00 576.40 L400.50 576.39 L401.00 576.39 L401.50 576.38 L402.00 576.37 L402.50 576.36 L403.00 576.35 L403.50 576.34 L404.00 576.33 L404.50 576.32 L405.00 576.31 L405.50 576.30 L406.00 576.29 L406.50 576.27 L407.00 576.26 L407.50 576.25 L408.00 576.23 L408.50 576.22 L409.00 576.20 L409.50 576.19 L410.00 576.17 L410.50 576.15 L411.00 576.14 L411.50 576.12 L412.00 576.10 L412.50 576.08 L413.00 576.06 L413.50 576.04 L414.00 576.02 L414.50 575.99 L415.00 575.97 L415.50 575.95 L416.00 575.92 L416.50 575.90 L417.00 575.87 L417.50 575.85 L418.00 575.82 L418.50 575.79 L419.00 575.76 L419.50 575.73 L420.00 575.70 L420.50 575.66 L421.00 575.62 L421.50 575.56 L422.00 575.50 L422.50 575.43 L423.00 575.35 L423.50 575.27 L424.00 575.19 L424.50 575.10 L425.00 575.01 L425.50 574.92 L426.00 574.83 L426.50 574.74 L427.00 574.65 L427.50 574.56 L428.00 574.48 L428.50 574.40 L429.00 574.33 L429.50 574.25 L430.00 574.18 L430.50 574.11 L431.00 574.04 L431.50 573.97 L432.00 573.90 L432.50 573.83 L433.00 573.76 L433.50 573.70 L434.00 573.63 L434.50 573.56 L435.00 573.49 L435.50 573.41 L436.00 573.34 L436.50 573.27 L437.00 573.19 L437.50 573.12 L438.00 573.04 L438.50 572.96 L439.00 572.87 L439.50 572.79 L440.00 572.70 L440.50 572.61 L441.00 572.52 L441.50 572.42 L442.00 572.32 L442.50 572.22 L443.00 572.12 L443.50 572.01 L444.00 571.90 L444.50 571.79 L445.00 571.68 L445.50 571.57 L446.00 571.45 L446.50 571.34 L447.00 571.22 L447.50 571.10 L448.00 570.98 L448.50 570.85 L449.00 570.73 L449.50 570.60 L450.00 570.48 L450.50 570.35 L451.00 570.22 L451.50 570.10 L452.00 569.97 L452.50 569.84 L453.00 569.71 L453.50 569.58 L454.00 569.45 L454.50 569.32 L455.00 569.19 L455.50 569.06 L456.00 568.93 L456.50 568.80 L457.00 568.67 L457.50 568.54 L458.00 568.41 L458.50 568.28 L459.00 568.15 L459.50 568.03 L460.00 567.90 L460.50 567.78 L461.00 567.65 L461.50 567.53 L462.00 567.40 L462.50 567.28 L463.00 567.16 L463.50 567.03 L464.00 566.91 L464.50 566.78 L465.00 566.66 L465.50 566.53 L466.00 566.40 L466.50 566.27 L467.00 566.14 L467.50 566.01 L468.00 565.87 L468.50 565.73 L469.00 565.59 L469.50 565.45 L470.00 565.30 L470.50 565.15 L471.01 564.99 L471.51 564.84 L472.02 564.68 L472.52 564.51 L473.03 564.35 L473.54 564.18 L474.04 564.01 L474.55 563.84 L475.05 563.66 L475.56 563.49 L476.06 563.31 L476.56 563.13 L477.07 562.94 L477.58 562.76 L478.08 562.57 L478.59 562.38 L479.09 562.19 L479.60 561.99 L480.10 561.80 L480.60 561.61 L481.10 561.41 L481.60 561.21 L482.10 561.01 L482.60 560.81 L483.10 560.61 L483.60 560.40 L484.10 560.19 L484.60 559.98 L485.10 559.77 L485.60 559.56 L486.10 559.34 L486.60 559.12 L487.10 558.90 L487.60 558.68 L488.10 558.45 L488.60 558.22 L489.10 557.99 L489.60 557.76 L490.10 557.52 L490.60 557.29 L491.10 557.05 L491.60 556.80 L492.10 556.56 L492.60 556.31 L493.10 556.05 L493.60 555.80 L494.12 555.53 L494.63 555.27 L495.15 554.99 L495.66 554.72 L496.18 554.44 L496.69 554.16 L497.21 553.87 L497.72 553.59 L498.24 553.29 L498.75 553.00 L499.27 552.70 L499.78 552.40 L500.30 552.09 L500.82 551.78 L501.33 551.46 L501.85 551.14 L502.36 550.82 L502.88 550.49 L503.39 550.16 L503.91 549.82 L504.42 549.48 L504.94 549.13 L505.45 548.78 L505.97 548.43 L506.48 548.07 L507.00 547.70 L507.52 547.32 L508.04 546.94 L508.57 546.55 L509.09 546.15 L509.61 545.75 L510.13 545.33 L510.66 544.91 L511.18 544.48 L511.70 544.05 L512.22 543.60 L512.74 543.15 L513.27 542.68 L513.79 542.21 L514.31 541.73 L514.83 541.23 L515.36 540.73 L515.88 540.22 L516.40 539.70 L516.92 539.17 L517.43 538.63 L517.95 538.07 L518.46 537.50 L518.98 536.91 L519.49 536.31 L520.01 535.69 L520.52 535.05 L521.04 534.40 L521.55 533.72 L522.07 533.03 L522.58 532.33 L523.10 531.60 L523.62 530.85 L524.14 530.09 L524.67 529.32 L525.19 528.51 L525.71 527.65 L526.23 526.75 L526.76 525.78 L527.28 524.73 L527.80 523.60 L528.37 522.24 L528.93 520.71 L529.50 519.01 L530.07 517.13 L530.63 515.06 L531.20 512.80 L531.77 510.60 L532.33 507.88 L532.90 503.40 L533.20 497.00 L533.20 496.70 L533.71 496.69 L534.23 496.68 L534.74 496.68 L535.25 496.67 L535.77 496.66 L536.28 496.65 L536.79 496.64 L537.30 496.64 L537.82 496.63 L538.33 496.62 L538.84 496.61 L539.36 496.61 L539.87 496.60 L540.38 496.59 L540.90 496.58 L541.41 496.57 L541.92 496.56 L542.43 496.55 L542.95 496.54 L543.46 496.53 L543.97 496.52 L544.49 496.51 L545.00 496.50 L545.50 496.49 L546.00 496.48 L546.51 496.46 L547.01 496.45 L547.51 496.43 L548.01 496.42 L548.52 496.41 L549.02 496.39 L549.52 496.37 L550.02 496.36 L550.53 496.34 L551.03 496.33 L551.53 496.31 L552.03 496.29 L552.54 496.27 L553.04 496.25 L553.54 496.23 L554.04 496.21 L554.55 496.19 L555.05 496.17 L555.55 496.15 L556.05 496.13 L556.56 496.11 L557.06 496.09 L557.56 496.07 L558.06 496.04 L558.57 496.02 L559.07 496.00 L559.57 495.97 L560.07 495.95 L560.58 495.92 L561.08 495.90 L561.58 495.87 L562.08 495.85 L562.59 495.82 L563.09 495.80 L563.59 495.77 L564.09 495.74 L564.60 495.71 L565.10 495.69 L565.60 495.66 L566.10 495.63 L566.60 495.60 L567.11 495.57 L567.61 495.54 L568.11 495.51 L568.61 495.48 L569.12 495.45 L569.62 495.42 L570.12 495.38 L570.62 495.35 L571.13 495.32 L571.63 495.29 L572.13 495.25 L572.63 495.22 L573.14 495.19 L573.64 495.15 L574.14 495.12 L574.64 495.08 L575.15 495.05 L575.65 495.01 L576.15 494.98 L576.65 494.94 L577.16 494.91 L577.66 494.87 L578.16 494.83 L578.66 494.80 L579.17 494.76 L579.67 494.72 L580.17 494.68 L580.67 494.64 L581.18 494.60 L581.68 494.57 L582.18 494.53 L582.68 494.49 L583.19 494.45 L583.69 494.41 L584.19 494.37 L584.69 494.32 L585.20 494.28 L585.70 494.24 L586.20 494.20 L586.70 494.16 L587.20 494.11 L587.71 494.07 L588.21 494.02 L588.71 493.97 L589.21 493.92 L589.71 493.87 L590.22 493.82 L590.72 493.76 L591.22 493.71 L591.72 493.65 L592.22 493.59 L592.73 493.53 L593.23 493.47 L593.73 493.41 L594.23 493.35 L594.73 493.28 L595.23 493.22 L595.74 493.15 L596.24 493.08 L596.74 493.01 L597.24 492.94 L597.74 492.87 L598.25 492.80 L598.75 492.72 L599.25 492.65 L599.75 492.57 L600.25 492.50 L600.76 492.42 L601.26 492.34 L601.76 492.26 L602.26 492.18 L602.76 492.10 L603.27 492.01 L603.77 491.93 L604.27 491.85 L604.77 491.76 L605.27 491.67 L605.77 491.59 L606.28 491.50 L606.78 491.41 L607.28 491.32 L607.78 491.23 L608.28 491.14 L608.79 491.04 L609.29 490.95 L609.79 490.86 L610.29 490.76 L610.79 490.67 L611.30 490.57 L611.80 490.48 L612.30 490.38 L612.80 490.28 L613.30 490.18 L613.81 490.08 L614.31 489.99 L614.81 489.89 L615.31 489.78 L615.81 489.68 L616.32 489.58 L616.82 489.48 L617.32 489.38 L617.82 489.28 L618.32 489.17 L618.83 489.07 L619.33 488.96 L619.83 488.86 L620.33 488.76 L620.83 488.65 L621.33 488.55 L621.84 488.44 L622.34 488.33 L622.84 488.23 L623.34 488.12 L623.84 488.01 L624.35 487.91 L624.85 487.80 L625.35 487.69 L625.85 487.59 L626.35 487.48 L626.86 487.37 L627.36 487.26 L627.86 487.16 L628.36 487.05 L628.86 486.94 L629.37 486.83 L629.87 486.72 L630.37 486.61 L630.87 486.51 L631.37 486.40 L631.88 486.29 L632.38 486.18 L632.88 486.08 L633.38 485.97 L633.88 485.86 L634.38 485.75 L634.89 485.65 L635.39 485.54 L635.89 485.43 L636.39 485.32 L636.89 485.22 L637.40 485.11 L637.90 485.01 L638.40 484.90 L638.90 484.79 L639.40 484.69 L639.91 484.58 L640.41 484.47 L640.91 484.36 L641.41 484.26 L641.91 484.15 L642.42 484.04 L642.92 483.93 L643.42 483.81 L643.92 483.70 L644.42 483.59 L644.92 483.48 L645.43 483.36 L645.93 483.25 L646.43 483.14 L646.93 483.02 L647.43 482.91 L647.94 482.79 L648.44 482.67 L648.94 482.56 L649.44 482.44 L649.94 482.32 L650.45 482.20 L650.95 482.08 L651.45 481.96 L651.95 481.84 L652.45 481.72 L652.96 481.60 L653.46 481.48 L653.96 481.36 L654.46 481.24 L654.96 481.11 L655.47 480.99 L655.97 480.87 L656.47 480.74 L656.97 480.62 L657.47 480.49 L657.98 480.37 L658.48 480.24 L658.98 480.12 L659.48 479.99 L659.98 479.86 L660.48 479.73 L660.99 479.61 L661.49 479.48 L661.99 479.35 L662.49 479.22 L662.99 479.09 L663.50 478.96 L664.00 478.83 L664.50 478.70 L665.00 478.57 L665.50 478.44 L666.01 478.30 L666.51 478.17 L667.01 478.04 L667.51 477.91 L668.01 477.77 L668.52 477.64 L669.02 477.51 L669.52 477.37 L670.02 477.24 L670.52 477.10 L671.02 476.97 L671.53 476.83 L672.03 476.70 L672.53 476.56 L673.03 476.42 L673.53 476.29 L674.04 476.15 L674.54 476.01 L675.04 475.88 L675.54 475.74 L676.04 475.60 L676.55 475.46 L677.05 475.32 L677.55 475.18 L678.05 475.05 L678.55 474.91 L679.06 474.77 L679.56 474.63 L680.06 474.49 L680.56 474.35 L681.06 474.21 L681.57 474.07 L682.07 473.92 L682.57 473.78 L683.07 473.64 L683.57 473.50 L684.08 473.36 L684.58 473.22 L685.08 473.07 L685.58 472.93 L686.08 472.79 L686.58 472.65 L687.09 472.50 L687.59 472.36 L688.09 472.22 L688.59 472.07 L689.09 471.93 L689.60 471.79 L690.10 471.64 L690.60 471.50 L691.10 471.36 L691.60 471.21 L692.10 471.07 L692.60 470.92 L693.10 470.78 L693.60 470.64 L694.10 470.49 L694.60 470.35 L695.10 470.20 L695.60 470.05 L696.10 469.91 L696.60 469.76 L697.10 469.62 L697.60 469.47 L698.10 469.32 L698.60 469.18 L699.10 469.03 L699.60 468.88 L700.10 468.73 L700.60 468.58 L701.10 468.44 L701.60 468.29 L702.10 468.14 L702.60 467.99 L703.10 467.84 L703.60 467.69 L704.10 467.54 L704.60 467.39 L705.10 467.24 L705.60 467.08 L706.10 466.93 L706.60 466.78 L707.10 466.63 L707.60 466.48 L708.10 466.32 L708.60 466.17 L709.10 466.01 L709.60 465.86 L710.10 465.71 L710.60 465.55 L711.10 465.40 L711.60 465.24 L712.10 465.08 L712.60 464.93 L713.10 464.77 L713.60 464.61 L714.10 464.46 L714.60 464.30 L715.10 464.14 L715.60 463.98 L716.10 463.82 L716.60 463.66 L717.10 463.50 L717.60 463.34 L718.10 463.18 L718.60 463.02 L719.10 462.86 L719.60 462.69 L720.10 462.53 L720.60 462.37 L721.10 462.20 L721.60 462.04 L722.10 461.87 L722.60 461.71 L723.10 461.54 L723.60 461.38 L724.10 461.21 L724.60 461.04 L725.10 460.88 L725.60 460.71 L726.10 460.54 L726.60 460.37 L727.10 460.20 L727.60 460.03 L728.10 459.86 L728.60 459.69 L729.10 459.52 L729.60 459.34 L730.10 459.17 L730.60 459.00 L731.10 458.82 L731.60 458.65 L732.10 458.48 L732.60 458.30 L733.10 458.12 L733.60 457.95 L734.10 457.77 L734.60 457.59 L735.10 457.41 L735.60 457.23 L736.10 457.06 L736.60 456.88 L737.10 456.69 L737.60 456.51 L738.10 456.33 L738.60 456.15 L739.10 455.97 L739.60 455.78 L740.10 455.60 L740.60 455.41 L741.10 455.23 L741.60 455.04 L742.10 454.85 L742.60 454.67 L743.10 454.48 L743.60 454.29 L744.10 454.10 L744.61 453.91 L745.12 453.71 L745.62 453.51 L746.13 453.31 L746.64 453.11 L747.15 452.90 L747.66 452.70 L748.16 452.49 L748.67 452.28 L749.18 452.07 L749.69 451.85 L750.20 451.64 L750.70 451.42 L751.21 451.20 L751.72 450.98 L752.23 450.76 L752.74 450.54 L753.24 450.32 L753.75 450.10 L754.26 449.87 L754.77 449.64 L755.28 449.42 L755.78 449.19 L756.29 448.96 L756.80 448.73 L757.31 448.50 L757.82 448.27 L758.32 448.04 L758.83 447.81 L759.34 447.58 L759.85 447.35 L760.36 447.12 L760.86 446.89 L761.37 446.65 L761.88 446.42 L762.39 446.19 L762.90 445.96 L763.40 445.73 L763.91 445.50 L764.42 445.27 L764.93 445.04 L765.44 444.81 L765.94 444.58 L766.45 444.35 L766.96 444.12 L767.47 443.90 L767.98 443.67 L768.48 443.45 L768.99 443.22 L769.50 443.00" fill="none" stroke="#1646da" stroke-width="2.6" stroke-linejoin="round"/><circle cx="376.00" cy="576.60" r="1.6" fill="#0a3cc8"/><circle cx="378.62" cy="576.58" r="1.6" fill="#0a3cc8"/><circle cx="381.24" cy="576.56" r="1.6" fill="#0a3cc8"/><circle cx="383.86" cy="576.54" r="1.6" fill="#0a3cc8"/><circle cx="386.48" cy="576.53" r="1.6" fill="#0a3cc8"/><circle cx="389.10" cy="576.51" r="1.6" fill="#0a3cc8"/><circle cx="391.72" cy="576.49" r="1.6" fill="#0a3cc8"/><circle cx="394.34" cy="576.46" r="1.6" fill="#0a3cc8"/><circle cx="396.96" cy="576.44" r="1.6" fill="#0a3cc8"/><circle cx="399.58" cy="576.41" r="1.6" fill="#0a3cc8"/><circle cx="402.20" cy="576.37" r="1.6" fill="#0a3cc8"/><circle cx="404.82" cy="576.31" r="1.6" fill="#0a3cc8"/><circle cx="407.44" cy="576.25" r="1.6" fill="#0a3cc8"/><circle cx="410.06" cy="576.17" r="1.6" fill="#0a3cc8"/><circle cx="412.68" cy="576.07" r="1.6" fill="#0a3cc8"/><circle cx="415.30" cy="575.96" r="1.6" fill="#0a3cc8"/><circle cx="417.92" cy="575.82" r="1.6" fill="#0a3cc8"/><circle cx="420.54" cy="575.66" r="1.6" fill="#0a3cc8"/><circle cx="423.16" cy="575.33" r="1.6" fill="#0a3cc8"/><circle cx="425.78" cy="574.87" r="1.6" fill="#0a3cc8"/><circle cx="428.40" cy="574.42" r="1.6" fill="#0a3cc8"/><circle cx="431.02" cy="574.04" r="1.6" fill="#0a3cc8"/><circle cx="433.64" cy="573.68" r="1.6" fill="#0a3cc8"/><circle cx="436.26" cy="573.30" r="1.6" fill="#0a3cc8"/><circle cx="438.88" cy="572.89" r="1.6" fill="#0a3cc8"/><circle cx="441.50" cy="572.42" r="1.6" fill="#0a3cc8"/><circle cx="444.12" cy="571.88" r="1.6" fill="#0a3cc8"/><circle cx="446.74" cy="571.28" r="1.6" fill="#0a3cc8"/><circle cx="449.36" cy="570.64" r="1.6" fill="#0a3cc8"/><circle cx="451.98" cy="569.97" r="1.6" fill="#0a3cc8"/><circle cx="454.60" cy="569.29" r="1.6" fill="#0a3cc8"/><circle cx="457.22" cy="568.61" r="1.6" fill="#0a3cc8"/><circle cx="459.84" cy="567.94" r="1.6" fill="#0a3cc8"/><circle cx="462.46" cy="567.29" r="1.6" fill="#0a3cc8"/><circle cx="465.08" cy="566.64" r="1.6" fill="#0a3cc8"/><circle cx="467.70" cy="565.95" r="1.6" fill="#0a3cc8"/><circle cx="470.32" cy="565.20" r="1.6" fill="#0a3cc8"/><circle cx="472.94" cy="564.38" r="1.6" fill="#0a3cc8"/><circle cx="475.56" cy="563.48" r="1.6" fill="#0a3cc8"/><circle cx="478.18" cy="562.53" r="1.6" fill="#0a3cc8"/><circle cx="480.80" cy="561.53" r="1.6" fill="#0a3cc8"/><circle cx="483.42" cy="560.47" r="1.6" fill="#0a3cc8"/><circle cx="486.04" cy="559.37" r="1.6" fill="#0a3cc8"/><circle cx="488.66" cy="558.20" r="1.6" fill="#0a3cc8"/><circle cx="491.28" cy="556.96" r="1.6" fill="#0a3cc8"/><circle cx="493.90" cy="555.65" r="1.6" fill="#0a3cc8"/><circle cx="496.52" cy="554.25" r="1.6" fill="#0a3cc8"/><circle cx="499.14" cy="552.77" r="1.6" fill="#0a3cc8"/><circle cx="501.76" cy="551.19" r="1.6" fill="#0a3cc8"/><circle cx="504.38" cy="549.51" r="1.6" fill="#0a3cc8"/><circle cx="507.00" cy="547.70" r="1.6" fill="#0a3cc8"/><circle cx="509.62" cy="545.74" r="1.6" fill="#0a3cc8"/><circle cx="512.24" cy="543.58" r="1.6" fill="#0a3cc8"/><circle cx="514.86" cy="541.21" r="1.6" fill="#0a3cc8"/><circle cx="517.48" cy="538.58" r="1.6" fill="#0a3cc8"/><circle cx="520.10" cy="535.57" r="1.6" fill="#0a3cc8"/><circle cx="522.72" cy="532.14" r="1.6" fill="#0a3cc8"/><circle cx="525.34" cy="528.26" r="1.6" fill="#0a3cc8"/><circle cx="527.96" cy="523.22" r="1.6" fill="#0a3cc8"/><circle cx="530.58" cy="515.25" r="1.6" fill="#0a3cc8"/><circle cx="533.20" cy="497.00" r="1.6" fill="#0a3cc8"/><circle cx="535.82" cy="496.66" r="1.6" fill="#0a3cc8"/><circle cx="538.44" cy="496.62" r="1.6" fill="#0a3cc8"/><circle cx="541.06" cy="496.58" r="1.6" fill="#0a3cc8"/><circle cx="543.68" cy="496.53" r="1.6" fill="#0a3cc8"/><circle cx="546.30" cy="496.47" r="1.6" fill="#0a3cc8"/><circle cx="548.92" cy="496.39" r="1.6" fill="#0a3cc8"/><circle cx="551.54" cy="496.31" r="1.6" fill="#0a3cc8"/><circle cx="554.16" cy="496.21" r="1.6" fill="#0a3cc8"/><circle cx="556.78" cy="496.10" r="1.6" fill="#0a3cc8"/><circle cx="559.40" cy="495.98" r="1.6" fill="#0a3cc8"/><circle cx="562.02" cy="495.85" r="1.6" fill="#0a3cc8"/><circle cx="564.64" cy="495.71" r="1.6" fill="#0a3cc8"/><circle cx="567.26" cy="495.56" r="1.6" fill="#0a3cc8"/><circle cx="569.88" cy="495.40" r="1.6" fill="#0a3cc8"/><circle cx="572.50" cy="495.23" r="1.6" fill="#0a3cc8"/><circle cx="575.12" cy="495.05" r="1.6" fill="#0a3cc8"/><circle cx="577.74" cy="494.86" r="1.6" fill="#0a3cc8"/><circle cx="580.36" cy="494.67" r="1.6" fill="#0a3cc8"/><circle cx="582.98" cy="494.46" r="1.6" fill="#0a3cc8"/><circle cx="585.60" cy="494.25" r="1.6" fill="#0a3cc8"/><circle cx="588.22" cy="494.02" r="1.6" fill="#0a3cc8"/><circle cx="590.84" cy="493.75" r="1.6" fill="#0a3cc8"/><circle cx="593.46" cy="493.44" r="1.6" fill="#0a3cc8"/><circle cx="596.08" cy="493.10" r="1.6" fill="#0a3cc8"/><circle cx="598.70" cy="492.73" r="1.6" fill="#0a3cc8"/><circle cx="601.32" cy="492.33" r="1.6" fill="#0a3cc8"/><circle cx="603.94" cy="491.90" r="1.6" fill="#0a3cc8"/><circle cx="606.56" cy="491.45" r="1.6" fill="#0a3cc8"/><circle cx="609.18" cy="490.97" r="1.6" fill="#0a3cc8"/><circle cx="611.80" cy="490.48" r="1.6" fill="#0a3cc8"/><circle cx="614.42" cy="489.96" r="1.6" fill="#0a3cc8"/><circle cx="617.04" cy="489.44" r="1.6" fill="#0a3cc8"/><circle cx="619.66" cy="488.90" r="1.6" fill="#0a3cc8"/><circle cx="622.28" cy="488.35" r="1.6" fill="#0a3cc8"/><circle cx="624.90" cy="487.79" r="1.6" fill="#0a3cc8"/><circle cx="627.52" cy="487.23" r="1.6" fill="#0a3cc8"/><circle cx="630.14" cy="486.66" r="1.6" fill="#0a3cc8"/><circle cx="632.76" cy="486.10" r="1.6" fill="#0a3cc8"/><circle cx="635.38" cy="485.54" r="1.6" fill="#0a3cc8"/><circle cx="638.00" cy="484.98" r="1.6" fill="#0a3cc8"/><circle cx="640.62" cy="484.43" r="1.6" fill="#0a3cc8"/><circle cx="643.24" cy="483.85" r="1.6" fill="#0a3cc8"/><circle cx="645.86" cy="483.27" r="1.6" fill="#0a3cc8"/><circle cx="648.48" cy="482.66" r="1.6" fill="#0a3cc8"/><circle cx="651.10" cy="482.05" r="1.6" fill="#0a3cc8"/><circle cx="653.72" cy="481.42" r="1.6" fill="#0a3cc8"/><circle cx="656.34" cy="480.77" r="1.6" fill="#0a3cc8"/><circle cx="658.96" cy="480.12" r="1.6" fill="#0a3cc8"/><circle cx="661.58" cy="479.45" r="1.6" fill="#0a3cc8"/><circle cx="664.20" cy="478.78" r="1.6" fill="#0a3cc8"/><circle cx="666.82" cy="478.09" r="1.6" fill="#0a3cc8"/><circle cx="669.44" cy="477.39" r="1.6" fill="#0a3cc8"/><circle cx="672.06" cy="476.69" r="1.6" fill="#0a3cc8"/><circle cx="674.68" cy="475.97" r="1.6" fill="#0a3cc8"/><circle cx="677.30" cy="475.25" r="1.6" fill="#0a3cc8"/><circle cx="679.92" cy="474.53" r="1.6" fill="#0a3cc8"/><circle cx="682.54" cy="473.79" r="1.6" fill="#0a3cc8"/><circle cx="685.16" cy="473.05" r="1.6" fill="#0a3cc8"/><circle cx="687.78" cy="472.31" r="1.6" fill="#0a3cc8"/><circle cx="690.40" cy="471.56" r="1.6" fill="#0a3cc8"/><circle cx="693.02" cy="470.80" r="1.6" fill="#0a3cc8"/><circle cx="695.64" cy="470.04" r="1.6" fill="#0a3cc8"/><circle cx="698.26" cy="469.28" r="1.6" fill="#0a3cc8"/><circle cx="700.88" cy="468.50" r="1.6" fill="#0a3cc8"/><circle cx="703.50" cy="467.72" r="1.6" fill="#0a3cc8"/><circle cx="706.12" cy="466.93" r="1.6" fill="#0a3cc8"/><circle cx="708.74" cy="466.13" r="1.6" fill="#0a3cc8"/><circle cx="711.36" cy="465.31" r="1.6" fill="#0a3cc8"/><circle cx="713.98" cy="464.49" r="1.6" fill="#0a3cc8"/><circle cx="716.60" cy="463.66" r="1.6" fill="#0a3cc8"/><circle cx="719.22" cy="462.82" r="1.6" fill="#0a3cc8"/><circle cx="721.84" cy="461.96" r="1.6" fill="#0a3cc8"/><circle cx="724.46" cy="461.09" r="1.6" fill="#0a3cc8"/><circle cx="727.08" cy="460.21" r="1.6" fill="#0a3cc8"/><circle cx="729.70" cy="459.31" r="1.6" fill="#0a3cc8"/><circle cx="732.32" cy="458.40" r="1.6" fill="#0a3cc8"/><circle cx="734.94" cy="457.47" r="1.6" fill="#0a3cc8"/><circle cx="737.56" cy="456.53" r="1.6" fill="#0a3cc8"/><circle cx="740.18" cy="455.57" r="1.6" fill="#0a3cc8"/><circle cx="742.80" cy="454.59" r="1.6" fill="#0a3cc8"/><circle cx="745.42" cy="453.59" r="1.6" fill="#0a3cc8"/><circle cx="748.04" cy="452.54" r="1.6" fill="#0a3cc8"/><circle cx="750.66" cy="451.44" r="1.6" fill="#0a3cc8"/><circle cx="753.28" cy="450.30" r="1.6" fill="#0a3cc8"/><circle cx="755.90" cy="449.14" r="1.6" fill="#0a3cc8"/><circle cx="758.52" cy="447.95" r="1.6" fill="#0a3cc8"/><circle cx="761.14" cy="446.76" r="1.6" fill="#0a3cc8"/><circle cx="763.76" cy="445.57" r="1.6" fill="#0a3cc8"/><circle cx="766.38" cy="444.38" r="1.6" fill="#0a3cc8"/><circle cx="769.00" cy="443.22" r="1.6" fill="#0a3cc8"/><text x="376.00" y="605.5" font-size="12.6" fill="#1e1e1e" text-anchor="middle" font-family="Liberation Sans">0</text><text x="428.40" y="605.5" font-size="12.6" fill="#1e1e1e" text-anchor="middle" font-family="Liberation Sans">5</text><text x="480.80" y="605.5" font-size="12.6" fill="#1e1e1e" text-anchor="middle" font-family="Liberation Sans">10</text><text x="533.20" y="605.5" font-size="12.6" fill="#1e1e1e" text-anchor="middle" font-family="Liberation Sans">15</text><text x="585.60" y="605.5" font-size="12.6" fill="#1e1e1e" text-anchor="middle" font-family="Liberation Sans">20</text><text x="638.00" y="605.5" font-size="12.6" fill="#1e1e1e" text-anchor="middle" font-family="Liberation Sans">25</text><text x="690.40" y="605.5" font-size="12.6" fill="#1e1e1e" text-anchor="middle" font-family="Liberation Sans">30</text><text x="742.80" y="605.5" font-size="12.6" fill="#1e1e1e" text-anchor="middle" font-family="Liberation Sans">35</text><text x="357.8" y="453.87" font-size="12.6" fill="#1e1e1e" text-anchor="end" font-family="Liberation Sans">7E-3</text><text x="357.8" y="472.06" font-size="12.6" fill="#1e1e1e" text-anchor="end" font-family="Liberation Sans">6.5E-3</text><text x="357.8" y="490.25" font-size="12.6" fill="#1e1e1e" text-anchor="end" font-family="Liberation Sans">6E-3</text><text x="357.8" y="508.44" font-size="12.6" fill="#1e1e1e" text-anchor="end" font-family="Liberation Sans">5.5E-3</text><text x="357.8" y="526.63" font-size="12.6" fill="#1e1e1e" text-anchor="end" font-family="Liberation Sans">5E-3</text><text x="357.8" y="544.82" font-size="12.6" fill="#1e1e1e" text-anchor="end" font-family="Liberation Sans">4.5E-3</text><text x="357.8" y="563.01" font-size="12.6" fill="#1e1e1e" text-anchor="end" font-family="Liberation Sans">4E-3</text><text x="357.8" y="581.20" font-size="12.6" fill="#1e1e1e" text-anchor="end" font-family="Liberation Sans">3.5E-3</text></svg><div class="a" style="left:762px;top:401px;width:17px;height:238px;background:linear-gradient(to right,rgba(0,0,0,0),rgba(0,0,0,0.10))"></div><div class="a" style="left:779px;top:401px;width:2px;height:238px;background:#e2e2e1"></div>
<div class="a" style="left:783px;top:71px;width:151px;height:610px;background:#e8e8e7;border-radius:7px 7px 0 0;overflow:hidden">
<div class="a" style="left:0;top:0;width:151px;height:37px;background:#f3f3f2;border-bottom:1px solid #b9b9b6"></div>
</div>
<div class="a" style="left:796.5px;top:79px;font-size:15px;-webkit-text-stroke:0.45px #34393b;color:#34393b">Segment Errors</div>
<svg class="a" style="left:911px;top:84px" width="10" height="10"><path d="M1.3 1.3L8.7 8.7M8.7 1.3L1.3 8.7" stroke="#2e3436" stroke-width="2.2"/></svg>
<div class="a" style="left:783px;top:108px;width:135px;height:529px;background:#fff"></div>
<div class="a" style="left:784px;top:109px;width:46px;height:27px;border:1px solid #b9b9b7;border-radius:3px;background:linear-gradient(#ececeb,#dfdfde)"></div>
<div class="a" style="left:787px;top:113px;font-size:14px;color:#2e3436">Index</div>
<div class="a" style="left:831px;top:109px;width:85px;height:27px;border:1px solid #b9b9b7;border-radius:3px;background:linear-gradient(#ececeb,#dfdfde)"></div>
<div class="a" style="left:835px;top:113px;font-size:14px;color:#2e3436">Error</div>
<div class="a" style="left:784px;top:156px;width:132px;height:1px;background:#8e8e8e"></div><div class="a" style="left:800.5px;top:137px;font-size:14.5px;color:#1a1a1a">1</div><div class="a" style="left:831px;top:137px;width:75.5px;text-align:right;font-size:14.4px;color:#1a1a1a">4.17e-07</div><div class="a" style="left:784px;top:176px;width:132px;height:1px;background:#8e8e8e"></div><div class="a" style="left:800.5px;top:157px;font-size:14.5px;color:#1a1a1a">2</div><div class="a" style="left:831px;top:157px;width:75.5px;text-align:right;font-size:14.4px;color:#1a1a1a">3.99e-07</div><div class="a" style="left:784px;top:196px;width:132px;height:1px;background:#8e8e8e"></div><div class="a" style="left:800.5px;top:177px;font-size:14.5px;color:#1a1a1a">3</div><div class="a" style="left:831px;top:177px;width:75.5px;text-align:right;font-size:14.4px;color:#1a1a1a">4.36e-07</div><div class="a" style="left:784px;top:216px;width:132px;height:1px;background:#8e8e8e"></div><div class="a" style="left:800.5px;top:197px;font-size:14.5px;color:#1a1a1a">4</div><div class="a" style="left:831px;top:197px;width:75.5px;text-align:right;font-size:14.4px;color:#1a1a1a">6.89e-07</div><div class="a" style="left:784px;top:236px;width:132px;height:1px;background:#8e8e8e"></div><div class="a" style="left:800.5px;top:217px;font-size:14.5px;color:#1a1a1a">5</div><div class="a" style="left:831px;top:217px;width:75.5px;text-align:right;font-size:14.4px;color:#1a1a1a">2.92e-07</div><div class="a" style="left:784px;top:256px;width:132px;height:1px;background:#8e8e8e"></div><div class="a" style="left:800.5px;top:237px;font-size:14.5px;color:#1a1a1a">6</div><div class="a" style="left:831px;top:237px;width:75.5px;text-align:right;font-size:14.4px;color:#1a1a1a">2.92e-07</div><div class="a" style="left:784px;top:276px;width:132px;height:1px;background:#8e8e8e"></div><div class="a" style="left:800.5px;top:257px;font-size:14.5px;color:#1a1a1a">7</div><div class="a" style="left:831px;top:257px;width:75.5px;text-align:right;font-size:14.4px;color:#1a1a1a">6.89e-07</div><div class="a" style="left:784px;top:296px;width:132px;height:1px;background:#8e8e8e"></div><div class="a" style="left:800.5px;top:277px;font-size:14.5px;color:#1a1a1a">8</div><div class="a" style="left:831px;top:277px;width:75.5px;text-align:right;font-size:14.4px;color:#1a1a1a">1.20e-07</div><div class="a" style="left:784px;top:316px;width:132px;height:1px;background:#8e8e8e"></div><div class="a" style="left:800.5px;top:297px;font-size:14.5px;color:#1a1a1a">9</div><div class="a" style="left:831px;top:297px;width:75.5px;text-align:right;font-size:14.4px;color:#1a1a1a">2.99e-07</div><div class="a" style="left:784px;top:336px;width:132px;height:1px;background:#8e8e8e"></div><div class="a" style="left:800.5px;top:317px;font-size:14.5px;color:#1a1a1a">10</div><div class="a" style="left:831px;top:317px;width:75.5px;text-align:right;font-size:14.4px;color:#1a1a1a">2.99e-07</div><div class="a" style="left:784px;top:356px;width:132px;height:1px;background:#8e8e8e"></div><div class="a" style="left:800.5px;top:337px;font-size:14.5px;color:#1a1a1a">11</div><div class="a" style="left:831px;top:337px;width:75.5px;text-align:right;font-size:14.4px;color:#1a1a1a">1.30e-07</div><div class="a" style="left:784px;top:376px;width:132px;height:1px;background:#8e8e8e"></div><div class="a" style="left:800.5px;top:357px;font-size:14.5px;color:#1a1a1a">12</div><div class="a" style="left:831px;top:357px;width:75.5px;text-align:right;font-size:14.4px;color:#1a1a1a">5.05e-07</div><div class="a" style="left:784px;top:396px;width:132px;height:1px;background:#8e8e8e"></div><div class="a" style="left:800.5px;top:377px;font-size:14.5px;color:#1a1a1a">13</div><div class="a" style="left:831px;top:377px;width:75.5px;text-align:right;font-size:14.4px;color:#1a1a1a">3.76e-07</div><div class="a" style="left:784px;top:416px;width:132px;height:1px;background:#8e8e8e"></div><div class="a" style="left:800.5px;top:397px;font-size:14.5px;color:#1a1a1a">14</div><div class="a" style="left:831px;top:397px;width:75.5px;text-align:right;font-size:14.4px;color:#1a1a1a">3.76e-07</div><div class="a" style="left:784px;top:436px;width:132px;height:1px;background:#8e8e8e"></div><div class="a" style="left:800.5px;top:417px;font-size:14.5px;color:#1a1a1a">15</div><div class="a" style="left:831px;top:417px;width:75.5px;text-align:right;font-size:14.4px;color:#1a1a1a">5.05e-07</div><div class="a" style="left:784px;top:456px;width:132px;height:1px;background:#8e8e8e"></div><div class="a" style="left:800.5px;top:437px;font-size:14.5px;color:#1a1a1a">16</div><div class="a" style="left:831px;top:437px;width:75.5px;text-align:right;font-size:14.4px;color:#1a1a1a">1.00e-07</div><div class="a" style="left:784px;top:476px;width:132px;height:1px;background:#8e8e8e"></div><div class="a" style="left:800.5px;top:457px;font-size:14.5px;color:#1a1a1a">17</div><div class="a" style="left:831px;top:457px;width:75.5px;text-align:right;font-size:14.4px;color:#1a1a1a">8.01e-08</div><div class="a" style="left:784px;top:496px;width:132px;height:1px;background:#8e8e8e"></div><div class="a" style="left:800.5px;top:477px;font-size:14.5px;color:#1a1a1a">18</div><div class="a" style="left:831px;top:477px;width:75.5px;text-align:right;font-size:14.4px;color:#1a1a1a">8.01e-08</div><div class="a" style="left:784px;top:516px;width:132px;height:1px;background:#8e8e8e"></div><div class="a" style="left:800.5px;top:497px;font-size:14.5px;color:#1a1a1a">19</div><div class="a" style="left:831px;top:497px;width:75.5px;text-align:right;font-size:14.4px;color:#1a1a1a">3.90e-08</div><div class="a" style="left:784px;top:536px;width:132px;height:1px;background:#8e8e8e"></div><div class="a" style="left:800.5px;top:517px;font-size:14.5px;color:#1a1a1a">20</div><div class="a" style="left:831px;top:517px;width:75.5px;text-align:right;font-size:14.4px;color:#1a1a1a">5.39e-07</div><div class="a" style="left:784px;top:556px;width:132px;height:1px;background:#8e8e8e"></div><div class="a" style="left:800.5px;top:537px;font-size:14.5px;color:#1a1a1a">21</div><div class="a" style="left:831px;top:537px;width:75.5px;text-align:right;font-size:14.4px;color:#1a1a1a">3.40e-07</div><div class="a" style="left:784px;top:576px;width:132px;height:1px;background:#8e8e8e"></div><div class="a" style="left:800.5px;top:557px;font-size:14.5px;color:#1a1a1a">22</div><div class="a" style="left:831px;top:557px;width:75.5px;text-align:right;font-size:14.4px;color:#1a1a1a">1.59e-07</div><div class="a" style="left:784px;top:596px;width:132px;height:1px;background:#8e8e8e"></div><div class="a" style="left:800.5px;top:577px;font-size:14.5px;color:#1a1a1a">23</div><div class="a" style="left:831px;top:577px;width:75.5px;text-align:right;font-size:14.4px;color:#1a1a1a">5.60e-07</div><div class="a" style="left:784px;top:616px;width:132px;height:1px;background:#8e8e8e"></div><div class="a" style="left:800.5px;top:597px;font-size:14.5px;color:#1a1a1a">24</div><div class="a" style="left:831px;top:597px;width:75.5px;text-align:right;font-size:14.4px;color:#1a1a1a">5.00e-07</div>
<div class="a" style="left:831px;top:136px;width:1px;height:481px;background:#8e8e8e"></div>
<div class="a" style="left:916px;top:136px;width:1px;height:481px;background:#8e8e8e"></div>
<div class="a" style="left:918px;top:108px;width:16px;height:529px;background:#cfcfcf;border-left:1px solid #bdbdbd"></div>
<div class="a" style="left:923px;top:127px;width:6px;height:492px;border-radius:3px;background:#7e8284"></div>
<svg class="a" style="left:921px;top:112px" width="11" height="8"><path d="M1.5 6.5L5.5 2.5L9.5 6.5" fill="none" stroke="#2e3436" stroke-width="1.6"/></svg>
<svg class="a" style="left:921px;top:626px" width="11" height="8"><path d="M1.5 1.5L5.5 5.5L9.5 1.5" fill="none" stroke="#2e3436" stroke-width="1.6"/></svg>
<div class="a" style="left:816px;top:643px;width:22px;height:22px;border:2px solid #8a8a8a;border-top-color:#c4c4c4;border-left-color:#c4c4c4;background:#fff"></div>
<svg class="a" style="left:819px;top:646px" width="16" height="16"><path d="M2.8 7.5L1.5 13.5H14.8L13.5 7.5" fill="#eef3f4" stroke="#5f6566" stroke-width="1"/><rect x="1" y="12.3" width="14.5" height="3" rx="1" fill="#2a302b"/><path d="M2 5.5Q3.2 1.8 6.5 2.6Q8.5 3.2 11 6.8" fill="none" stroke="#1f3a78" stroke-width="4.2" stroke-linecap="round"/><path d="M2 5.5Q3.2 1.8 6.5 2.6Q8.5 3.2 11 6.8" fill="none" stroke="#4f77c6" stroke-width="2.4" stroke-linecap="round"/><path d="M8 9L14.6 5L12.8 12.6Z" fill="#4068b8" stroke="#1f3a78" stroke-width="0.9" stroke-linejoin="round"/></svg>
<div class="a" style="left:878px;top:643px;width:22px;height:22px;border:2px solid #8a8a8a;border-top-color:#c4c4c4;border-left-color:#c4c4c4;background:#fff"></div>
<svg class="a" style="left:881px;top:646px" width="16" height="16"><path d="M3.5 1.5H10L13 4.5V14.5H3.5Z" fill="#fff" stroke="#111" stroke-width="1.1"/><path d="M5.5 6.5H11M5.5 8.5H11M5.5 10.5H11M5.5 12.5H9" stroke="#444" stroke-width="0.8"/><path d="M5.5 4.5H8" stroke="#7070c0" stroke-width="0.8"/></svg>
</body></html>
